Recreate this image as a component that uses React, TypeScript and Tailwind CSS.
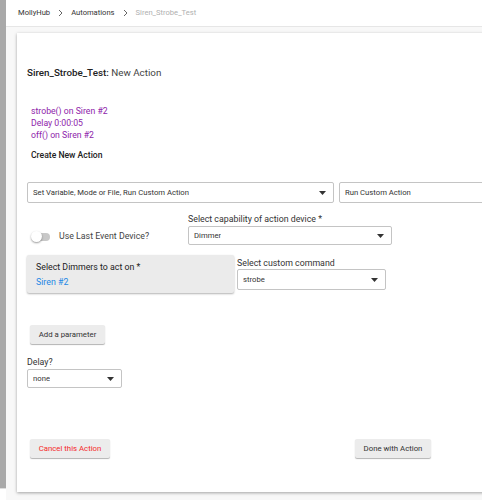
import React from 'react';

const font = { fontFamily: 'Roboto, "Liberation Sans", Arial, sans-serif' };

function Caret() {
  return (
    <svg width="7" height="4" viewBox="0 0 7 4" className="shrink-0">
      <path d="M0 0 L7 0 L3.5 4 Z" fill="#333" />
    </svg>
  );
}

function Chevron() {
  return (
    <svg width="5" height="8" viewBox="0 0 5 8" className="shrink-0">
      <path d="M1 1 L4 4 L1 7" fill="none" stroke="#666" strokeWidth="1" />
    </svg>
  );
}

function SelectBox({ value, className, caret = true }: { value: React.ReactNode; className?: string; caret?: boolean }) {
  return (
    <div
      className={`flex items-center justify-between border border-[#c4c4c4] rounded-[2px] bg-white pl-[5px] pr-[7px] text-[7.7px] text-[#333] ${className ?? ''}`}
    >
      <span className="truncate">{value}</span>
      {caret && <Caret />}
    </div>
  );
}

function FlatButton({ children, className }: { children: React.ReactNode; className?: string }) {
  return (
    <div
      className={`h-[19px] flex items-center justify-center whitespace-nowrap bg-[#ececec] rounded-[2px] shadow-[0_1px_1px_rgba(0,0,0,0.3)] text-[7.8px] ${className ?? ''}`}
    >
      {children}
    </div>
  );
}

export default function App() {
  const history = ['strobe() on Siren #2', 'Delay 0:00:05', 'off() on Siren #2'];

  return (
    <div className="w-[482px] h-[500px] overflow-hidden flex bg-[#f8f8f8]" style={font}>
      {/* scrollbar strip */}
      <div className="w-[6px] shrink-0 flex flex-col">
        <div className="h-[488px] bg-[#a9a9a9]" />
        <div className="flex-1 bg-white border-t border-[#ddd]" />
      </div>

      <div className="flex-1 flex flex-col min-w-0">
        {/* breadcrumb bar */}
        <div className="h-[27px] shrink-0 bg-white border-b border-[#e6e6e6] flex items-center pl-[12px] text-[7.6px]">
          <span className="text-[#333]">MollyHub</span>
          <span className="mx-[8px]"><Chevron /></span>
          <span className="text-[#333]">Automations</span>
          <span className="mx-[8px]"><Chevron /></span>
          <span className="text-[#b0b0b0]">Siren_Strobe_Test</span>
        </div>

        <div className="pl-[11px] pt-[6px]">
          <div className="w-[480px] h-[459px] bg-white shadow-[0_1px_3px_rgba(0,0,0,0.35)] pl-[10px] pt-[32px]">
            <div className="text-[9.8px] leading-[16px] text-[#222]">
              <span className="font-medium">Siren_Strobe_Test:</span>
              <span className="text-[#444]"> New Action</span>
            </div>

            <div className="mt-[24px] pl-[4px] text-[8.7px] leading-[12px] text-[#8e24aa]">
              {history.map((h) => (
                <div key={h}>{h}</div>
              ))}
            </div>

            <div className="mt-[7px] pl-[4px] text-[8.6px] leading-[14px] font-medium text-[#222]">
              Create New Action
            </div>

            <div className="mt-[20px] flex gap-[5px]">
              <SelectBox value="Set Variable, Mode or File, Run Custom Action" className="w-[311px] h-[21px]" />
              <SelectBox value="Run Custom Action" caret={false} className="w-[160px] h-[21px]" />
            </div>

            <div className="mt-[10px] flex">
              <div className="w-[161px] flex items-center pt-[15px] pl-[4px]">
                <div className="relative w-[20px] h-[11px] flex items-center">
                  <div className="ml-[3px] w-[16px] h-[8px] rounded-full bg-[#c8c8c8]" />
                  <div className="absolute left-0 top-0 w-[11px] h-[11px] rounded-full bg-white shadow-[0_1px_2px_rgba(0,0,0,0.4)]" />
                </div>
                <span className="ml-[8px] text-[8.8px] text-[#444]">Use Last Event Device?</span>
              </div>
              <div className="flex flex-col">
                <span className="text-[8.8px] leading-[12px] text-[#333]">Select capability of action device *</span>
                <SelectBox value="Dimmer" className="mt-[1px] w-[204px] h-[19px]" />
              </div>
            </div>

            <div className="mt-[10px] flex gap-[3px]">
              <div className="w-[207px] h-[38px] bg-[#ebebeb] rounded-[2px] shadow-[0_1px_2px_rgba(0,0,0,0.3)] pl-[9px] pt-[5px] text-[8.8px] leading-[14px]">
                <div className="text-[#222]">Select Dimmers to act on *</div>
                <div className="mt-[1px] text-[#1e88e5]">Siren #2</div>
              </div>
              <div className="flex flex-col pt-[2px]">
                <span className="text-[8.8px] leading-[12px] text-[#333]">Select custom command</span>
                <SelectBox value="strobe" className="w-[149px] h-[21px]" />
              </div>
            </div>

            <FlatButton className="mt-[32px] ml-[3px] w-[75px] text-[#333]">Add a parameter</FlatButton>

            <div className="mt-[12px] text-[8.8px] leading-[12px] text-[#333]">Delay?</div>
            <SelectBox value="none" className="mt-[1px] w-[95px] h-[19px]" />

            <div className="mt-[51px] flex w-[404px] justify-between pl-[3px]">
              <FlatButton className="w-[80px] text-[#f52a2a]">Cancel this Action</FlatButton>
              <FlatButton className="w-[76px] text-[#333]">Done with Action</FlatButton>
            </div>
          </div>
        </div>
      </div>
    </div>
  );
}
